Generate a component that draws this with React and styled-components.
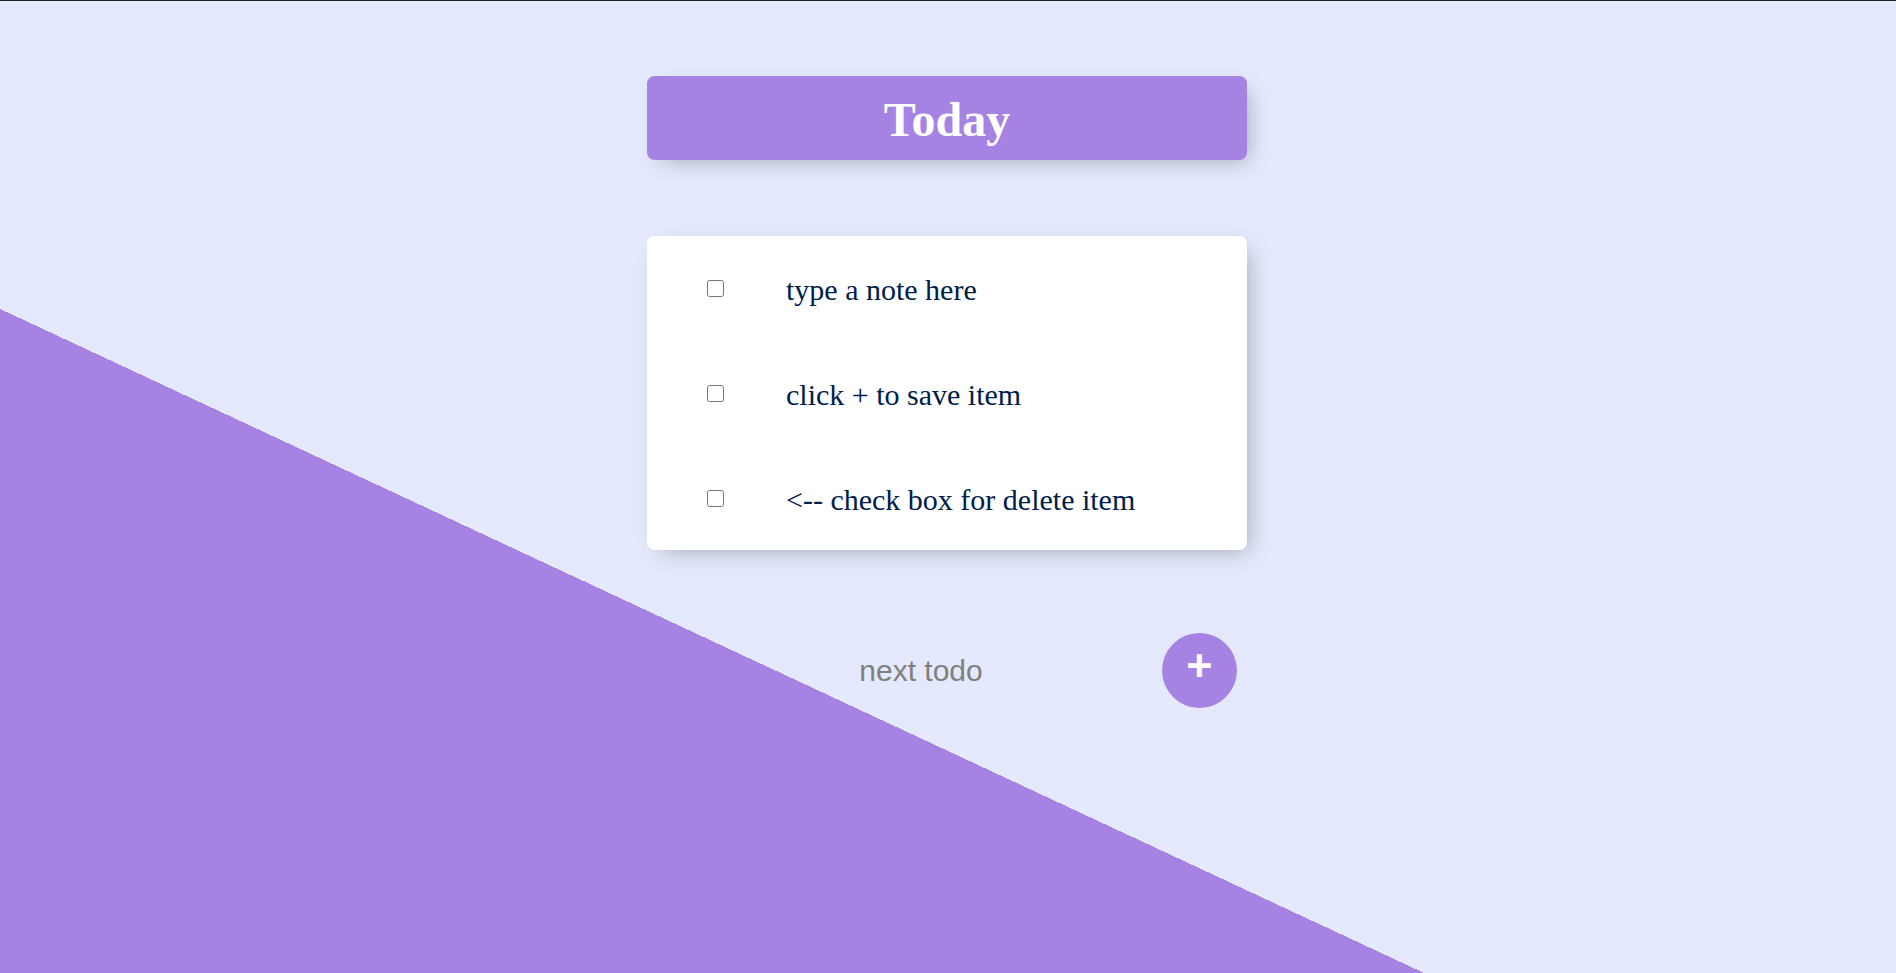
import React from "react";
import styled, { createGlobalStyle } from "styled-components";

const GlobalStyle = createGlobalStyle`
  html, body {
    margin: 0;
    padding: 0;
    background: #E4E9FD;
  }
  * { box-sizing: border-box; }
`;

const Page = styled.div`
  min-height: 100vh;
  border-top: 1px solid #202124;
  background-color: #E4E9FD;
  background-image: linear-gradient(25deg, #A683E3 50%, #E4E9FD 50%);
  background-size: 100% 1500px;
  background-repeat: no-repeat;
  display: flex;
  flex-direction: column;
  align-items: center;
  padding: 75px 2px 0 0;
`;

const Heading = styled.div`
  width: 600px;
  height: 84px;
  background: #A683E3;
  border-radius: 7.5px;
  box-shadow: 7.5px 7.5px 22.5px -7.5px rgba(0, 0, 0, 0.3);
  display: flex;
  align-items: center;
  justify-content: center;
`;

const Title = styled.h1`
  margin: 0;
  padding-top: 2px;
  font-family: "Liberation Serif", "Times New Roman", serif;
  font-weight: 700;
  font-size: 48px;
  color: #fff;
`;

const Card = styled.div`
  width: 600px;
  margin-top: 76px;
  background: #fff;
  border-radius: 7.5px;
  box-shadow: 7.5px 7.5px 22.5px -7.5px rgba(0, 0, 0, 0.3);
`;

const Item = styled.div`
  min-height: 105px;
  display: flex;
  align-items: center;
  &:last-child {
    min-height: 104px;
  }
`;

const Check = styled.input`
  width: 17px;
  height: 17px;
  margin: 0 0 0 60px;
  flex: none;
`;

const Note = styled.p`
  margin: 0;
  padding: 3px 0 0 62px;
  font-family: "Liberation Serif", "Times New Roman", serif;
  font-size: 30px;
  font-weight: 200;
  color: #00204a;
`;

const Form = styled.form`
  width: 600px;
  margin-top: 75px;
  padding-left: 36px;
  display: flex;
  align-items: center;
  gap: 3px;
`;

const TextInput = styled.input`
  width: 476px;
  height: 90px;
  padding-top: 3px;
  border: none;
  background: transparent;
  text-align: center;
  font-family: "Liberation Sans", Arial, sans-serif;
  font-size: 30px;
  font-weight: 200;
  color: #333;
  outline: none;
  &::placeholder {
    color: grey;
    opacity: 1;
  }
`;

const AddButton = styled.button`
  width: 75px;
  height: 75px;
  flex: none;
  border-radius: 50%;
  border: 0;
  background: #A683E3;
  color: #fff;
  font-family: "Liberation Sans", Arial, sans-serif;
  font-size: 45px;
  font-weight: 700;
  padding: 0 0 9px 0;
  display: flex;
  align-items: center;
  justify-content: center;
  cursor: pointer;
`;

const items = [
  "type a note here",
  "click + to save item",
  "<-- check box for delete item",
];

export default function App() {
  return (
    <>
      <GlobalStyle />
      <Page>
        <Heading>
          <Title>Today</Title>
        </Heading>
        <Card>
          {items.map((t) => (
            <Item key={t}>
              <Check type="checkbox" />
              <Note>{t}</Note>
            </Item>
          ))}
        </Card>
        <Form onSubmit={(e) => e.preventDefault()}>
          <TextInput type="text" placeholder="next todo" autoComplete="off" />
          <AddButton type="submit">+</AddButton>
        </Form>
      </Page>
    </>
  );
}
